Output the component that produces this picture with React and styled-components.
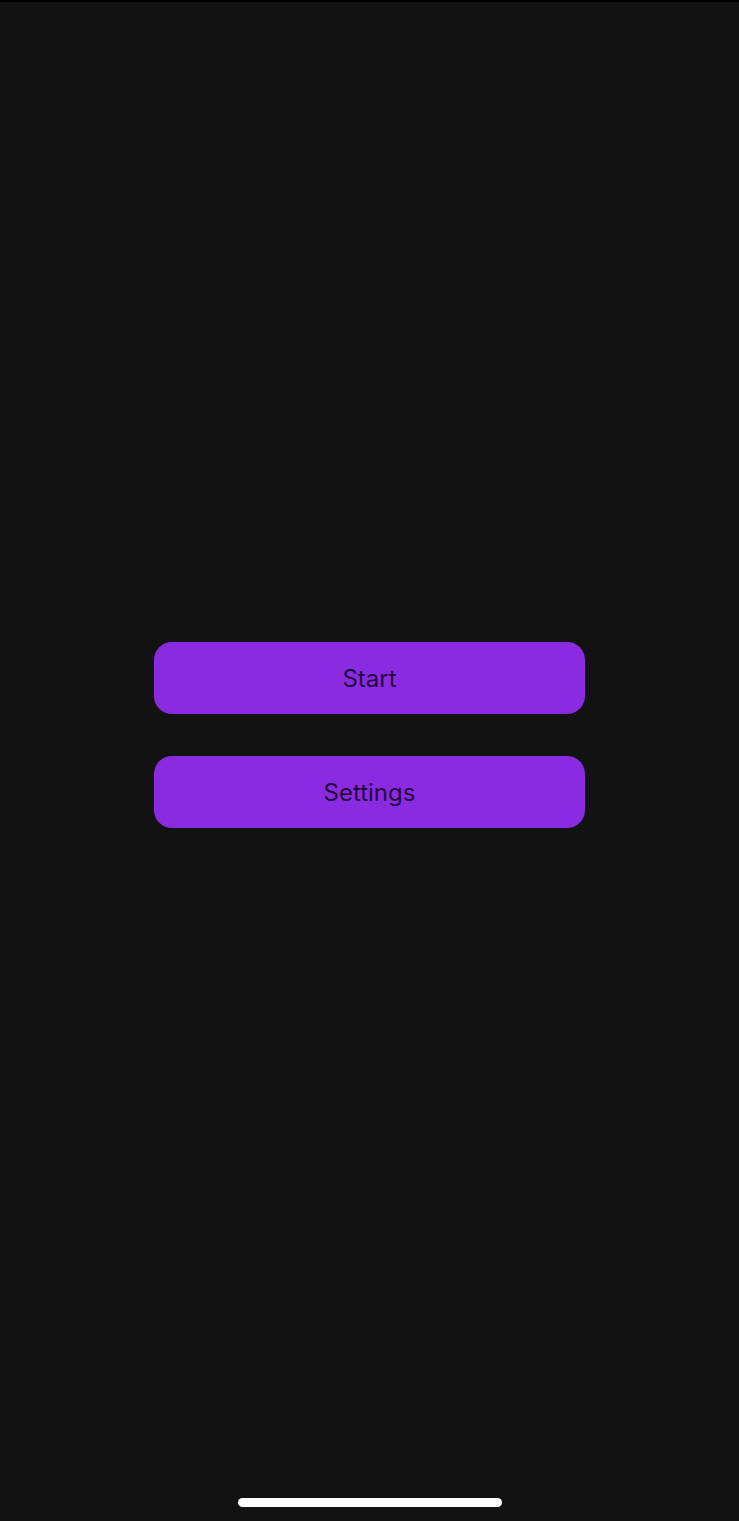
import styled, { createGlobalStyle } from "styled-components";

const GlobalStyle = createGlobalStyle`
  html, body {
    margin: 0;
    padding: 0;
    background: #121212;
  }
  body {
    font-family: Inter, "Noto Sans", sans-serif;
  }
`;

const Screen = styled.div`
  box-sizing: border-box;
  height: 100vh;
  display: flex;
  flex-direction: column;
  border-top: 2px solid #000;
  background: #121212;
`;

const Main = styled.main`
  flex: 1;
  display: flex;
  flex-direction: column;
  align-items: center;
  justify-content: center;
  gap: 42px;
  padding-bottom: 2px;
`;

const MenuButton = styled.button`
  width: 431px;
  height: 72px;
  border: none;
  border-radius: 18px;
  background: #8a2be2;
  color: #24083f;
  font-family: Inter, "Noto Sans", sans-serif;
  font-size: 24px;
  font-weight: 400;
  cursor: pointer;
`;

const HomeBar = styled.div`
  display: flex;
  justify-content: center;
  padding: 28px 0 14px;
`;

const Indicator = styled.div`
  width: 264px;
  height: 9px;
  border-radius: 5px;
  background: #fff;
`;

const App = () => {
  return (
    <>
      <GlobalStyle />
      <Screen>
        <Main>
          <MenuButton>Start</MenuButton>
          <MenuButton>Settings</MenuButton>
        </Main>
        <HomeBar>
          <Indicator />
        </HomeBar>
      </Screen>
    </>
  );
};

export default App;
